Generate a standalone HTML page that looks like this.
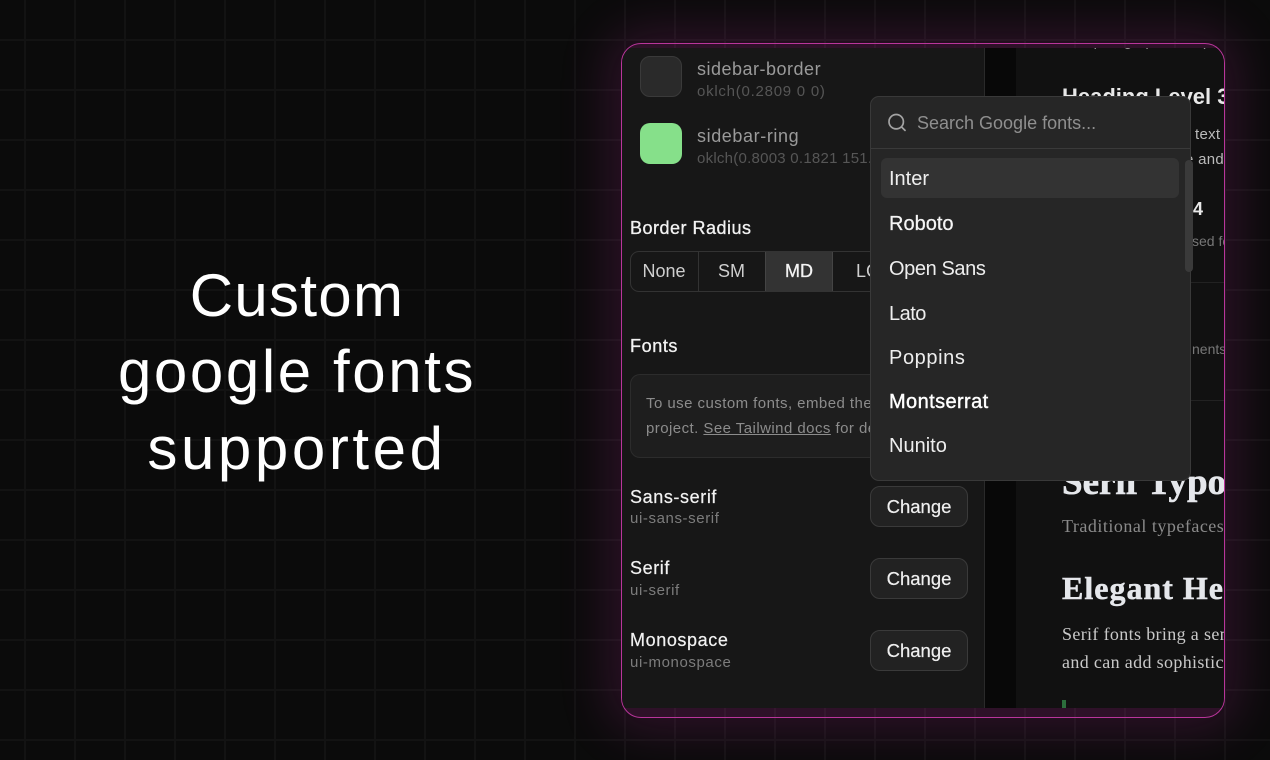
<!DOCTYPE html>
<html><head><meta charset="utf-8"><style>
html,body{margin:0;padding:0;width:1270px;height:760px;overflow:hidden;background:#0b0b0b}
body{position:relative;font-family:"Liberation Sans",sans-serif}
.grid{position:absolute;inset:0;background-image:linear-gradient(to right,#131313 2px,transparent 2px),linear-gradient(to bottom,#131313 2px,transparent 2px);background-size:50px 50px;background-position:24px 39px}
.hd{position:absolute;left:0;width:594px;text-align:center;color:#fff;font-size:60px;line-height:76px;white-space:nowrap}
.frame{position:absolute;left:621px;top:43px;width:602px;height:673px;border:1px solid #b9359b;border-radius:20px;background:rgba(200,50,170,.19);box-shadow:0 0 50px 12px rgba(200,50,170,.19);overflow:hidden}
.stage{position:absolute;left:-622px;top:-44px;width:1270px;height:760px}
.r{position:absolute;box-sizing:border-box}
.t{position:absolute;white-space:nowrap;line-height:24px;margin-top:-11px}
.clip{position:absolute;overflow:hidden}
.s{font-family:"Liberation Serif",serif}
.btn{position:absolute;left:870px;width:98px;height:41px;box-sizing:border-box;background:#222;border:1px solid #3a3a3a;border-radius:10px;color:#efefef;font-size:18.5px;line-height:39px;text-align:center;-webkit-text-stroke:.2px #efefef}
.seg{position:absolute;top:252px;height:38px;font-size:18px;line-height:38px;text-align:center;color:#cfcfcf}
.f{color:#f2f2f2;font-size:18px;letter-spacing:.6px;-webkit-text-stroke:.2px #f2f2f2}
.g{color:#7c7c7c;font-size:15px;letter-spacing:.6px}
.i{left:889px;font-size:20px;color:#eee}
</style></head><body>
<div class="grid"></div>
<div class="hd" style="top:258px;letter-spacing:1.3px">Custom</div>
<div class="hd" style="top:334px;letter-spacing:2.6px">google fonts</div>
<div class="hd" style="top:411px;letter-spacing:3.6px">supported</div>

<div class="frame"><div class="stage">
  <div class="r" style="left:622px;top:48px;width:362px;height:660px;background:#171717"></div>
  <div class="r" style="left:984px;top:48px;width:1px;height:660px;background:#2a2a2a"></div>
  <div class="r" style="left:985px;top:48px;width:31px;height:660px;background:#080808"></div>
  <div class="r" style="left:1016px;top:48px;width:209px;height:660px;background:#111"></div>

  <div class="r" style="left:640px;top:56px;width:42px;height:41px;background:#2a2a2a;border:1px solid #3a3a3a;border-radius:10px"></div>
  <div class="t" style="left:697px;top:68px;font-size:18px;color:#9a9a9a;letter-spacing:.5px">sidebar-border</div>
  <div class="t" style="left:697px;top:91px;font-size:15px;color:#565656;letter-spacing:.75px">oklch(0.2809 0 0)</div>
  <div class="r" style="left:640px;top:123px;width:42px;height:41px;background:#86e08a;border-radius:10px"></div>
  <div class="t" style="left:697px;top:135px;font-size:18px;color:#9a9a9a;letter-spacing:.6px">sidebar-ring</div>
  <div class="t" style="left:697px;top:158px;font-size:15px;color:#565656;letter-spacing:.25px">oklch(0.8003 0.1821 151.711)</div>

  <div class="t" style="left:630px;top:227px;font-size:18px;letter-spacing:.5px;color:#f2f2f2;-webkit-text-stroke:.3px #f2f2f2">Border Radius</div>
  <div class="r" style="left:630px;top:251px;width:300px;height:41px;border:1px solid #333;border-radius:9px;background:#171717;overflow:hidden"></div>
  <div class="r" style="left:698px;top:252px;width:1px;height:39px;background:#333"></div>
  <div class="r" style="left:765px;top:252px;width:68px;height:39px;background:#333;border-left:1px solid #444;border-right:1px solid #444"></div>
  <div class="seg" style="left:631px;width:66px">None</div>
  <div class="seg" style="left:699px;width:65px">SM</div>
  <div class="seg" style="left:766px;width:66px;color:#f4f4f4;-webkit-text-stroke:.3px #f4f4f4">MD</div>
  <div class="seg" style="left:835px;width:66px">LG</div>

  <div class="t" style="left:630px;top:345px;font-size:18px;letter-spacing:.6px;color:#f2f2f2;-webkit-text-stroke:.3px #f2f2f2">Fonts</div>
  <div class="r" style="left:630px;top:374px;width:300px;height:84px;border:1px solid #2c2c2c;border-radius:10px;background:#1e1e1e"></div>
  <div class="t" style="left:646px;top:403px;font-size:15px;color:#8c8c8c;letter-spacing:.45px">To use custom fonts, embed them in your</div>
  <div class="t" style="left:646px;top:428px;font-size:15px;color:#8c8c8c;letter-spacing:.45px">project. <span style="text-decoration:underline">See Tailwind docs</span> for details.</div>

  <div class="t f" style="left:630px;top:496px">Sans-serif</div>
  <div class="t g" style="left:630px;top:518px">ui-sans-serif</div>
  <div class="btn" style="top:486px">Change</div>
  <div class="t f" style="left:630px;top:567px">Serif</div>
  <div class="t g" style="left:630px;top:590px">ui-serif</div>
  <div class="btn" style="top:558px">Change</div>
  <div class="t f" style="left:630px;top:639px">Monospace</div>
  <div class="t g" style="left:630px;top:662px">ui-monospace</div>
  <div class="btn" style="top:630px">Change</div>

  <div class="clip" style="left:1016px;top:48px;width:208px;height:660px">
    <div class="t" style="left:46px;top:-7px;font-size:15px;color:#999">Text paragraph example</div>
    <div class="t" style="left:46px;top:48px;font-size:22px;font-weight:bold;color:#e8e8e8">Heading Level 3</div>
    <div class="t" style="left:179px;top:86px;font-size:15px;letter-spacing:.3px;color:#bbb">text</div>
    <div class="t" style="left:169px;top:111px;font-size:15px;letter-spacing:.3px;color:#bbb">e and</div>
    <div class="t" style="left:177px;top:160px;font-size:18px;font-weight:bold;color:#e8e8e8">4</div>
    <div class="t" style="left:176px;top:192px;font-size:14px;color:#777">sed fo</div>
    <div class="r" style="left:0;top:234px;width:209px;height:1px;background:#222"></div>
    <div class="t" style="left:176px;top:300px;font-size:14px;color:#777">nents</div>
    <div class="r" style="left:0;top:352px;width:209px;height:1px;background:#222"></div>
    <div class="t s" style="left:46px;top:434px;font-size:37px;font-weight:bold;color:#e5e7eb;-webkit-text-stroke:.6px #e5e7eb">Serif Typography</div>
    <div class="t s" style="left:46px;top:477px;font-size:18px;letter-spacing:.5px;color:#8a8a8a">Traditional typefaces</div>
    <div class="t s" style="left:46px;top:539px;font-size:32px;font-weight:bold;letter-spacing:1px;color:#e5e7eb;-webkit-text-stroke:.5px #e5e7eb">Elegant Headings</div>
    <div class="t s" style="left:46px;top:585px;font-size:18px;letter-spacing:.35px;color:#c9c9c9">Serif fonts bring a sense</div>
    <div class="t s" style="left:46px;top:613px;font-size:18px;letter-spacing:.35px;color:#c9c9c9">and can add sophistication</div>
    <div class="r" style="left:46px;top:652px;width:4px;height:8px;background:#2c6e3c"></div>
  </div>

  <div class="r" style="left:870px;top:96px;width:321px;height:385px;background:#262626;border:1px solid #393939;border-radius:9px"></div>
  <div class="r" style="left:871px;top:148px;width:319px;height:1px;background:#3a3a3a"></div>
  <svg class="r" style="left:887px;top:112px" width="20" height="20" viewBox="0 0 20 20" fill="none" stroke="#a3a3a3" stroke-width="1.7" stroke-linecap="round"><circle cx="9.2" cy="9.7" r="7.2"/><path d="M14.6 15l3.4 3.4"/></svg>
  <div class="t" style="left:917px;top:122px;font-size:18px;color:#8f8f8f">Search Google fonts...</div>
  <div class="r" style="left:881px;top:158px;width:298px;height:40px;background:#333;border-radius:6px"></div>
  <div class="r" style="left:1185px;top:160px;width:8px;height:112px;background:#3a3a3a;border-radius:4px"></div>
  <div class="t i" style="top:178px">Inter</div>
  <div class="t i" style="top:223px;color:#f5f5f5;-webkit-text-stroke:.25px #f5f5f5">Roboto</div>
  <div class="t i" style="top:268px;letter-spacing:-.4px">Open Sans</div>
  <div class="t i" style="top:313px;letter-spacing:-.5px">Lato</div>
  <div class="t i" style="top:357px;letter-spacing:.6px">Poppins</div>
  <div class="t i" style="top:401px;letter-spacing:.4px;color:#fff;-webkit-text-stroke:.4px #fff">Montserrat</div>
  <div class="t i" style="top:445px">Nunito</div>
</div></div>
</body></html>
